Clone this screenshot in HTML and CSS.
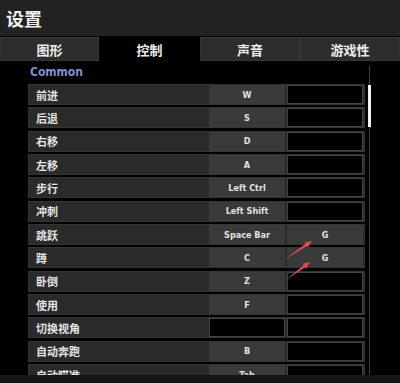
FILE: index.html
```html
<!DOCTYPE html>
<html lang="zh">
	<head>
		<meta charset="UTF-8" />
		<title>设置</title>
		<link rel="stylesheet" href="styles.css">
	</head>
	<body>
		<div class="page">
			<div class="header">设置</div>
			<nav class="tabs">
				<div class="tab">图形</div>
				<div class="tab active">控制</div>
				<div class="tab">声音</div>
				<div class="tab">游戏性</div>
			</nav>

			<div class="content">
				<div class="section-title">Common</div>
				<div class="rows">
					<div class="row"><span class="label">前进</span><span class="key">W</span><span class="key empty"></span></div>
					<div class="row"><span class="label">后退</span><span class="key">S</span><span class="key empty"></span></div>
					<div class="row"><span class="label">右移</span><span class="key">D</span><span class="key empty"></span></div>
					<div class="row"><span class="label">左移</span><span class="key">A</span><span class="key empty"></span></div>
					<div class="row"><span class="label">步行</span><span class="key">Left Ctrl</span><span class="key empty"></span></div>
					<div class="row"><span class="label">冲刺</span><span class="key">Left Shift</span><span class="key empty"></span></div>
					<div class="row"><span class="label">跳跃</span><span class="key">Space Bar</span><span class="key">G</span></div>
					<div class="row"><span class="label">蹲</span><span class="key">C</span><span class="key">G</span></div>
					<div class="row"><span class="label">卧倒</span><span class="key">Z</span><span class="key empty"></span></div>
					<div class="row"><span class="label">使用</span><span class="key">F</span><span class="key empty"></span></div>
					<div class="row"><span class="label">切换视角</span><span class="key empty"></span><span class="key empty"></span></div>
					<div class="row"><span class="label">自动奔跑</span><span class="key">B</span><span class="key empty"></span></div>
					<div class="row"><span class="label">自动瞄准</span><span class="key">Tab</span><span class="key empty"></span></div>
				</div>

				<!-- barre de défilement -->
				<div class="scroll-track"><div class="scroll-thumb"></div></div>

				<!-- flèches rouges dessinées à la main -->
				<svg class="arrows" viewBox="0 0 40 50" width="40" height="50">
					<path d="M6 23 L27.5 6.8 L26.5 5.4 L34 4 L29.9 10.4 L28.9 9 Z" fill="#dc4a52" />
					<path d="M8 43 L25.6 28.2 L24.6 26.8 L32 25 L28.2 31.6 L27.2 30.2 Z" fill="#dc4a52" />
				</svg>
			</div>
			<div class="footer"></div>
		</div>
	</body>
</html>
```

FILE: styles.css
```css
body {
	margin: 0;
	background: #000;
	font-family: "Noto Sans CJK SC", "DejaVu Sans", sans-serif;
	color: #e6e6e6;
}

.page {
	width: 400px;
	height: 383px;
	display: flex;
	flex-direction: column;
	overflow: hidden;
}

.header {
	height: 36px;
	flex-shrink: 0;
	background: #222222;
	font-size: 18px;
	font-weight: bold;
	line-height: 36px;
	padding-left: 6px;
	color: #f0f0f0;
}

/* ONGLETS */
.tabs {
	height: 24px;
	flex-shrink: 0;
	margin-top: 1px;
	display: grid;
	grid-template-columns: 99px 101px 100px 100px;
}

.tab {
	background: #2d2d2d;
	border: 1px solid #363636;
	box-sizing: border-box;
	display: flex;
	align-items: center;
	justify-content: center;
	font-size: 13px;
	font-weight: bold;
	color: #ececec;
}

.tab.active {
	background: #000;
	border-color: #000;
}
/* FIN ONGLETS */

.content {
	flex: 1;
	position: relative;
	overflow: hidden;
	padding-left: 28px;
}

.section-title {
	height: 23px;
	padding-left: 2px;
	font-family: "DejaVu Sans Condensed", "DejaVu Sans", sans-serif;
	font-stretch: condensed;
	font-size: 12px;
	font-weight: bold;
	line-height: 23px;
	color: #8191c9;
}

.rows {
	width: 337px;
	display: flex;
	flex-direction: column;
	gap: 2.35px;
}

.row {
	height: 21px;
	flex-shrink: 0;
	box-sizing: border-box;
	background: #2a2a2a;
	border: 1px solid #343434;
	display: flex;
	align-items: center;
	gap: 2px;
	padding: 0 1px 0 0;
}

.label {
	flex: 1;
	padding-left: 7px;
	font-size: 11px;
	font-weight: bold;
	color: #e4e4e4;
}

.key {
	width: 76px;
	height: 19px;
	box-sizing: border-box;
	background: #3a3a3a;
	display: flex;
	align-items: center;
	justify-content: center;
	font-family: "DejaVu Sans Condensed", "DejaVu Sans", sans-serif;
	font-stretch: condensed;
	font-size: 9px;
	font-weight: bold;
	color: #e2e2e2;
}

.key.empty {
	background: #000;
	border: 1px solid #444;
}

.scroll-track {
	position: absolute;
	left: 369px;
	top: 4px;
	bottom: 0;
	width: 1px;
	background: #3c3c3c;
}

.scroll-thumb {
	position: absolute;
	left: -1px;
	top: 20px;
	width: 3px;
	height: 42px;
	background: #f2f2f2;
}

.arrows {
	position: absolute;
	left: 278px;
	top: 176px;
}

.footer {
	height: 8px;
	flex-shrink: 0;
	background: #151515;
}
```
